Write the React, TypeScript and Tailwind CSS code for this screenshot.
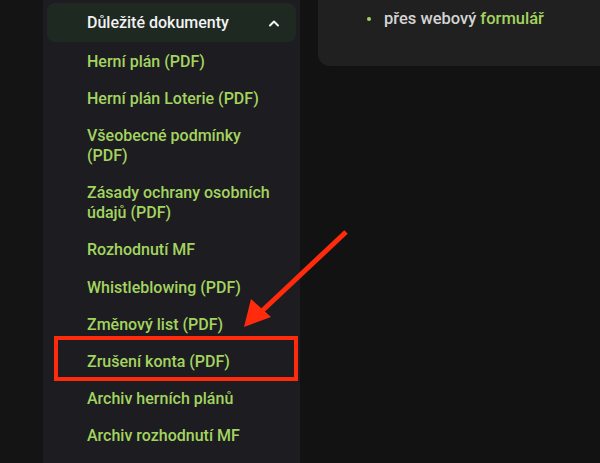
import React from "react";

const docs = [
  "Herní plán (PDF)",
  "Herní plán Loterie (PDF)",
  "Všeobecné podmínky (PDF)",
  "Zásady ochrany osobních údajů (PDF)",
  "Rozhodnutí MF",
  "Whistleblowing (PDF)",
  "Změnový list (PDF)",
  "Zrušení konta (PDF)",
  "Archiv herních plánů",
  "Archiv rozhodnutí MF",
];

export default function App() {
  return (
    <div
      className="relative w-[600px] h-[463px] overflow-hidden bg-[#121212] flex"
      style={{ fontFamily: "Roboto, 'Noto Sans', sans-serif" }}
    >
      <div className="w-[43px] shrink-0 bg-[#141414]" />
      <aside className="w-[257px] shrink-0 bg-[#1c1c21] px-[4px] pt-[3px]">
        <div className="h-[39px] rounded-lg bg-[#1e2922] flex items-center justify-between pl-[40px] pr-[16px]">
          <span className="text-[16px] font-medium text-[#f2f2f2]">Důležité dokumenty</span>
          <svg width="12" height="8" viewBox="0 0 12 8" fill="none">
            <path d="M2 6.5 6 2.5 10 6.5" stroke="#f2f2f2" strokeWidth="2" strokeLinecap="round" strokeLinejoin="round" />
          </svg>
        </div>
        <ul className="pl-[40px] pr-[14px] pt-[1px]">
          {docs.map((d) => (
            <li key={d} className="py-[8.6px] leading-5 text-[16px] font-medium text-[#a3d45f]">
              {d}
            </li>
          ))}
        </ul>
      </aside>
      <div className="w-[18px] shrink-0" />
      <div className="flex-1 self-start h-[66px] bg-[#202020] rounded-bl-xl pl-[49px] pt-[7px]">
        <div className="flex items-center gap-[13px] text-[16.5px] font-medium">
          <span className="w-[4px] h-[4px] rounded-full bg-[#a3d45f]" />
          <span className="text-[#d4d4d4]">
            přes webový <span className="text-[#a3d45f]">formulář</span>
          </span>
        </div>
      </div>

      <div className="absolute left-[54px] top-[336px] w-[244px] h-[45px] border-4 border-[#ff2b0c]" />
      <svg className="absolute left-0 top-0" width="600" height="463" viewBox="0 0 600 463">
        <line x1="346" y1="232" x2="262" y2="311" stroke="#ff2b0c" strokeWidth="5" />
        <polygon points="244,327 251,299 271,317" fill="#ff2b0c" />
      </svg>
    </div>
  );
}
